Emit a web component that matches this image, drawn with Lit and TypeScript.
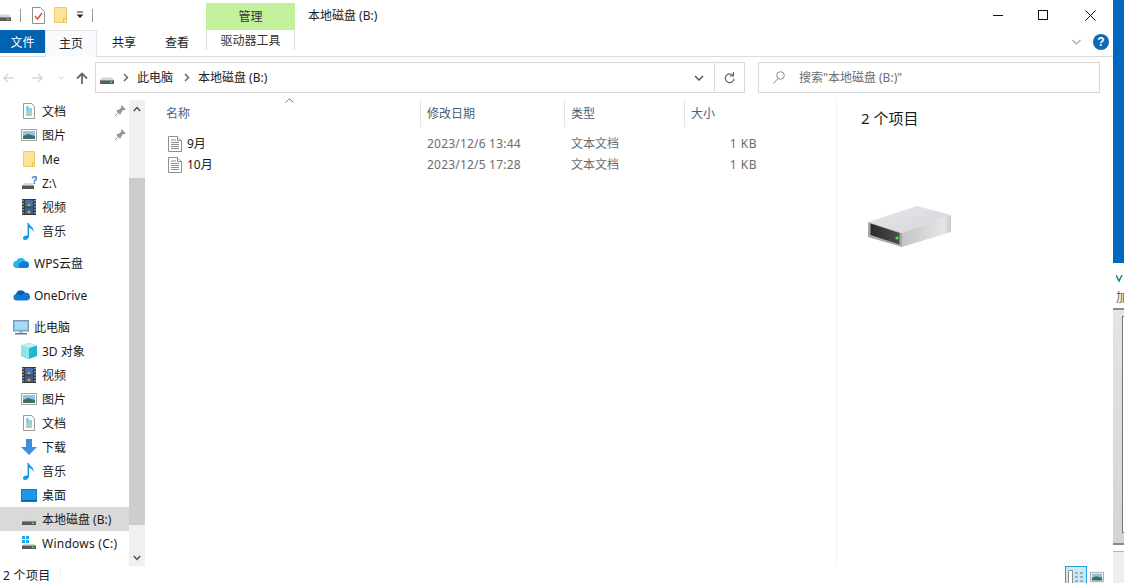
import { LitElement, html, css, svg } from "lit";
import { customElement } from "lit/decorators.js";

const driveSmall = () => html`<svg class="ic" width="16" height="16" viewBox="0 0 16 16"><path d="M3 7.5h10l2 2.5H1z" fill="#d6d6d8"/><path d="M1 10h14v4H1z" fill="#5b5b5b"/><path d="M1 10h14v1H1z" fill="#8c8c8c"/><rect x="11" y="11.5" width="2" height="1.5" fill="#3fe05a"/></svg>`;
const docIcon = () => html`<svg class="ic" width="16" height="16" viewBox="0 0 16 16"><path d="M2.5.5h8l3 3v12h-11z" fill="#fff" stroke="#9a9a9a"/><path d="M5 4h3M5 6h6M5 8h6" stroke="#2e9bd8"/><path d="M5 10h6M5 12h6" stroke="#5ea67e"/></svg>`;
const picIcon = () => html`<svg class="ic" width="16" height="14" viewBox="0 0 16 14"><rect x=".5" y="1.5" width="15" height="11" fill="#fff" stroke="#a3a3a3"/><rect x="2" y="3" width="12" height="8" fill="#8fc4ea"/><path d="M2 8l5-2 7 2v3H2z" fill="#3f6f63"/></svg>`;
const folderIcon = () => html`<svg class="ic" width="14" height="16" viewBox="0 0 14 16"><path d="M1.5.5h11v15h-11z" fill="#fbe39b" stroke="#eccd6c"/><path d="M10.5 15.5v-4h2" fill="none" stroke="#e9bd50"/></svg>`;
const netIcon = () => html`<svg class="ic" width="16" height="16" viewBox="0 0 16 16"><path d="M3 8h8l2 2.5H1z" fill="#d9d9d9"/><path d="M1 10.5h12V14H1z" fill="#555"/><text x="10" y="9" font-size="11" font-weight="700" fill="#2d7fd3" font-family="Liberation Sans">?</text></svg>`;
const videoIcon = () => html`<svg class="ic" width="14" height="16" viewBox="0 0 14 16"><rect width="14" height="16" fill="#3a3a3a"/><rect x="3" y="1" width="8" height="6.5" fill="#3f6fb0"/><rect x="3" y="8.5" width="8" height="6.5" fill="#3560a0"/><path d="M5 7l2-3 2 3zM5 14l2-3 2 3z" fill="#e2a32d"/><path d="M1 1v14M13 1v14" stroke="#ddd" stroke-dasharray="1.5 1.5"/></svg>`;
const musicIcon = () => html`<svg class="ic" width="12" height="17" viewBox="0 0 12 17"><path d="M4.5 0h1.4c.3 3 5.500 4 4.600 9-.6-2.500-2.500-3.500-4.500-4v8.500c0 2-2 3.500-4 3.500-1.500 0-2.300-1-2-2.300.4-1.500 2.500-2.500 4.500-2z" fill="#1b9ae8"/></svg>`;
const cloudWps = () => html`<svg class="ic" width="16" height="14" viewBox="0 0 16 14"><path d="M4 12a3.500 3.500 0 0 1-.6-7A5 5 0 0 1 12.500 5a3.500 3.500 0 0 1 0 7z" fill="#27b4e8"/><path d="M7 12a3 3 0 0 1 1-5.500A4 4 0 0 1 13 6a3 3 0 0 1 0 6z" fill="#1678d8"/></svg>`;
const cloudOne = () => html`<svg class="ic" width="17" height="12" viewBox="0 0 17 12"><path d="M3.500 11.500a3.300 3.300 0 0 1-.5-6.500 5 5 0 0 1 9.300-1 3.800 3.800 0 0 1 1.700 7.500z" fill="#1379d0"/><path d="M3.500 5.500a5 5 0 0 1 8.800-1.500c-2 .2-3 1.200-3.500 2.500-1.500-.7-3.500-.5-5.300-1z" fill="#0a5cab"/></svg>`;
const pcIcon = () => html`<svg class="ic" width="16" height="15" viewBox="0 0 16 15"><rect x=".5" y=".5" width="15" height="10.500" fill="#7cc4f2" stroke="#7b98ac"/><rect x="2" y="2" width="12" height="7.500" fill="#a6dcf9"/><rect x="6.500" y="11" width="3" height="2" fill="#a9b4ba"/><rect x="2" y="13" width="12" height="1.500" fill="#5d7788"/></svg>`;
const cubeIcon = () => html`<svg class="ic" width="16" height="16" viewBox="0 0 16 16"><path d="M8 0l8 2.500v10.500L8 16 0 13V2.500z" fill="#1fb9cf"/><path d="M0 2.500L8 5v11L0 13z" fill="#8fe3ea"/><path d="M8 0l8 2.500L8 5 0 2.500z" fill="#c5f0f2"/></svg>`;
const dlIcon = () => html`<svg class="ic" width="16" height="16" viewBox="0 0 16 16"><path d="M5 0h6v8h5l-8 8-8-8h5z" fill="#3d8fe0"/></svg>`;
const deskIcon = () => html`<svg class="ic" width="16" height="13" viewBox="0 0 16 13"><rect x=".5" y=".5" width="15" height="12" fill="#1c97ea" stroke="#0f7cc8"/><path d="M1 11h14v1H1z" fill="#0d5fa6"/></svg>`;
const winIcon = () => html`<svg class="ic" width="16" height="16" viewBox="0 0 16 16"><path d="M1 1h3v3H1zM5 1h3v3H5zM1 5h3v3H1zM5 5h3v3H5z" fill="#21a5ea"/><path d="M3 9h10l2 1.500H1z" fill="#d6d6d8"/><path d="M1 10.500h14V14H1z" fill="#5b5b5b"/><rect x="11" y="11.500" width="2" height="1.500" fill="#3fe05a"/></svg>`;
const pin = () => html`<svg class="pin" width="11" height="11" viewBox="0 0 11 11"><path d="M6.500 0L11 4.500 9.700 5 8 5 6 7.500 6 9 4.800 9.500 1.500 6.200 2 5 3.500 5 6 3 6 1.300z" fill="#8d979f"/><path d="M3 8L0 11" stroke="#8d979f"/></svg>`;
const txtIcon = () => html`<svg class="ic" width="14" height="16" viewBox="0 0 14 16"><path d="M.5.5h9l4 4v11H.5z" fill="#fff" stroke="#8e8e8e"/><path d="M9.500.5v4h4" fill="#eee" stroke="#8e8e8e"/><path d="M3 4h5M3 6.500h8M3 8.500h8M3 10.500h8M3 12.500h8" stroke="#8e8e8e"/></svg>`;

type Nav = { label: string; icon: () => unknown; pinned?: boolean; top?: boolean; gap?: boolean; sel?: boolean; wide?: boolean };
const nav: Nav[] = [
  { label: "文档", icon: docIcon, pinned: true },
  { label: "图片", icon: picIcon, pinned: true },
  { label: "Me", icon: folderIcon },
  { label: "Z:\\", icon: netIcon },
  { label: "视频", icon: videoIcon },
  { label: "音乐", icon: musicIcon },
  { label: "WPS云盘", icon: cloudWps, top: true, gap: true },
  { label: "OneDrive", icon: cloudOne, top: true, gap: true },
  { label: "此电脑", icon: pcIcon, top: true, gap: true },
  { label: "3D 对象", icon: cubeIcon },
  { label: "视频", icon: videoIcon },
  { label: "图片", icon: picIcon },
  { label: "文档", icon: docIcon },
  { label: "下载", icon: dlIcon },
  { label: "音乐", icon: musicIcon },
  { label: "桌面", icon: deskIcon },
  { label: "本地磁盘 (B:)", icon: driveSmall, sel: true },
  { label: "Windows (C:)", icon: winIcon, wide: true },
];
const files = [
  { n: "9月", d: "2023/12/6 13:44" },
  { n: "10月", d: "2023/12/5 17:28" },
];

const bigDrive = svg`<defs>
  <linearGradient id="t" x1="0" y1="0" x2="1" y2="1"><stop offset="0" stop-color="#e6e7ea"/><stop offset="1" stop-color="#d3d5d9"/></linearGradient>
  <linearGradient id="s" x1="0" y1="0" x2="1" y2="0"><stop offset="0" stop-color="#c4c4c6"/><stop offset=".85" stop-color="#e6e6e6"/><stop offset="1" stop-color="#c9c9cb"/></linearGradient>
  <linearGradient id="f" x1="0" y1="0" x2="1" y2="0"><stop offset="0" stop-color="#2b2b2b"/><stop offset="1" stop-color="#4c4c4c"/></linearGradient>
  </defs>
  <path d="M2 18L51 2l34 9-49 18z" fill="url(#t)"/>
  <path d="M36 29l49-18v17L36 43z" fill="url(#s)"/>
  <path d="M2 18l34 11v14L2 33z" fill="#a9a9ab"/>
  <path d="M4.500 19.500l29 9.500v11.500l-29-9.500z" fill="url(#f)"/>
  <circle cx="31" cy="34" r="1.600" fill="#3dea5c"/>`;

@customElement("app-root")
export class AppRoot extends LitElement {
  static styles = css`
    :host { display: block; width: 1124px; height: 583px; overflow: hidden; background: #fff;
      font-family: "Noto Sans", "Noto Sans CJK SC", sans-serif; font-size: 12px; color: #1a1a1a; }
    * { box-sizing: border-box; }
    .page { display: flex; height: 583px; }
    .win { width: 1113px; display: flex; flex-direction: column; }
    .ic { display: block; flex: none; }

    .title { height: 30px; display: flex; align-items: flex-end; flex: none; }
    .qat { width: 206px; height: 30px; display: flex; align-items: center; }
    .qat .clip { width: 12px; height: 16px; overflow: hidden; display: flex; justify-content: flex-end; }
    .qsep { width: 1px; height: 13px; background: #9a9a9a; }
    .manage { width: 89px; height: 27px; background: #c2f09b; display: flex; align-items: center; justify-content: center; color: #333; padding-bottom: 2px; }
    .caption { margin-left: 13px; flex: 1; height: 30px; display: flex; align-items: center; color: #222; font-size: 12px; }
    .wbtns { display: flex; height: 30px; }
    .wbtn { width: 46px; display: flex; align-items: center; justify-content: center; }

    .tabs { height: 27px; flex: none; display: flex; border-bottom: 1px solid #dadbdc; position: relative; }
    .tab { display: flex; align-items: center; justify-content: center; height: 26px; }
    .file { width: 45px; height: 23px; background: #0063b1; color: #fff; }
    .home { width: 52px; height: 27px; background: #f9fafc; border: 1px solid #e3e4e6; border-bottom: none; color: #222; padding-bottom: 2px; }
    .share { width: 54px; padding-bottom: 2px; }
    .view { width: 52px; padding-bottom: 2px; }
    .tool { width: 89px; height: 20px; margin-left: 3px; border: 1px solid #dadbdc; border-top: none; border-bottom: none; color: #333; }
    .ribbonR { margin-left: auto; display: flex; align-items: center; gap: 12px; padding: 0 4px 2px 0; }
    .help { width: 16px; height: 16px; border-radius: 50%; background: #0f68b8; color: #fff; font: 700 12px "Liberation Sans", sans-serif; display: flex; align-items: center; justify-content: center; }

    .addr { height: 42px; flex: none; display: flex; align-items: flex-start; padding-top: 5px; }
    .navbtns { width: 95px; height: 31px; display: flex; align-items: center; padding-left: 3px; }
    .crumb { width: 650px; height: 31px; border: 1px solid #d9d9d9; display: flex; align-items: center; color: #222; padding-left: 3px; }
    .crumb .sepch { width: 22px; display: flex; justify-content: center; }
    .crumb .txt1 { width: 39px; padding-bottom: 2px; }
    .crumb .txt2 { flex: 1; padding-bottom: 2px; }
    .crumb .dd { width: 31px; height: 29px; display: flex; align-items: center; justify-content: center; }
    .crumb .rf { width: 30px; height: 29px; border-left: 1px solid #d9d9d9; display: flex; align-items: center; justify-content: center; }
    .search { width: 342px; height: 31px; margin-left: 13px; border: 1px solid #d9d9d9; display: flex; align-items: center; padding-left: 14px; gap: 14px; color: #6d6d6d; }
    .search span { padding-bottom: 2px; }

    .main { flex: 1; display: flex; min-height: 0; }
    .nav { width: 129px; flex: none; }
    .nrow { height: 24px; display: flex; align-items: center; position: relative; color: #1a1a1a; }
    .nrow.gap { margin-top: 8px; }
    .nrow .slot { width: 16px; margin-left: 21px; display: flex; justify-content: center; margin-right: 5px; flex: none; }
    .nrow.top .slot { margin-left: 13px; }
    .nrow.sel { background: #d9d9d9; }
    .nrow .wide { letter-spacing: .25px; }
    .pin { position: absolute; left: 115px; top: 6px; }

    .sb { width: 16px; flex: none; background: #f0f0f0; display: flex; flex-direction: column; margin-top: 1px; }
    .sb .end { height: 17px; display: flex; align-items: center; justify-content: center; flex: none; }
    .sb .pad1 { height: 61px; }
    .sb .thumb { height: 347px; background: #cdcdcd; }
    .sb .pad2 { flex: 1; }

    .list { flex: 1; min-width: 0; padding-top: 1px; }
    .cols { display: grid; grid-template-columns: 275px 144px 120px 80px; }
    .head { height: 27px; position: relative; color: #4c607a; }
    .hcell { display: flex; align-items: center; padding-left: 6px; position: relative; padding-bottom: 2px; }
    .hcell.sep { border-left: 1px solid #e5e5e5; }
    .hcell.first { padding-left: 21px; }
    .sort { position: absolute; left: 140px; top: -2px; }
    .rows { margin-top: 6px; }
    .frow { height: 21px; color: #6d6d6d; grid-template-rows: 21px; line-height: 16px; }
    .fcell { display: flex; align-items: center; padding-left: 7px; }
    .fcell.date { letter-spacing: .2px; }
    .fcell.name { padding-left: 23px; gap: 5px; color: #1a1a1a; }
    .fcell.size { justify-content: flex-end; padding-right: 7px; letter-spacing: .5px; }

    .details { width: 277px; flex: none; border-left: 1px solid #f2f2f2; padding: 8px 0 0 24px; margin-top: 1px; }
    .dtitle { font-size: 15px; line-height: 20px; color: #1a1a1a; }
    .bigdrive { display: block; margin: 76px 0 0 5px; }

    .status { height: 17px; flex: none; display: flex; align-items: center; position: relative; padding-left: 3px; color: #1a1a1a; overflow: hidden; }
    .status .lbl { letter-spacing: .3px; padding-top: 1px; }
    .status .ssep { width: 1px; height: 14px; background: #f0f0f0; margin-left: 10px; }
    .vbtns { margin-left: auto; margin-right: 9px; display: flex; align-items: flex-start; gap: 3px; height: 17px; }
    .vb1 { width: 22px; height: 20px; background: #cce8f7; border: 1px solid #26a0da; display: flex; justify-content: center; padding-top: 3px; }
    .vb2 { padding-top: 5px; }
    .vb2 svg { width: 14px; height: 12px; }

    .strip { width: 11px; flex: none; display: flex; flex-direction: column; background: #fff; overflow: hidden; }
    .s-blue { height: 263px; background: #0067c0; flex: none; }
    .s-logo { height: 24px; padding: 7px 0 0 3px; flex: none; }
    .s-add { height: 21px; flex: none; padding-left: 3px; font-size: 12px; color: #555; line-height: 21px; white-space: nowrap; }
    .s-panel { flex: none; height: 237px; border-top: 2px solid #8a8a8a; border-bottom: 2px solid #8a8a8a; background: linear-gradient(#e4e4e4, #d4d4d4); padding: 6px 0 10px 9px; }
    .s-inner { height: 100%; border: 1px solid #777; border-right: none; background: #fff; }
    .s-foot { flex: 1; margin-top: 6px; border-top: 1px solid #b5b5b5; background: #efefef; }
  `;

  render() {
    const chev = html`<svg width="6" height="9" viewBox="0 0 6 9"><path d="M1 1l3.500 3.500L1 8" fill="none" stroke="#6b6b6b" stroke-width="1.500"/></svg>`;
    return html`<div class="page">
      <div class="win">
        <div class="title">
          <div class="qat">
            <div class="clip">${driveSmall()}</div>
            <div class="qsep" style="margin-left:8px"></div>
            <svg style="margin-left:11px" width="13" height="17" viewBox="0 0 13 17"><path d="M.5.5h8l4 4v12H.5z" fill="#fff" stroke="#8e8e8e"/><path d="M3 9l2.500 3L10 6" fill="none" stroke="#e0532a" stroke-width="1.500"/></svg>
            <svg style="margin-left:9px" width="13" height="16" viewBox="0 0 13 16"><path d="M.5.5h12v15H.5z" fill="#fbe39b" stroke="#eccd6c"/><path d="M9.500 15.500v-4h3" fill="none" stroke="#e9bd50"/></svg>
            <svg style="margin-left:9px" width="8" height="8" viewBox="0 0 8 8"><path d="M1 1h6" stroke="#222"/><path d="M.5 3.500h7L4 7z" fill="#222"/></svg>
            <div class="qsep" style="margin-left:8px"></div>
          </div>
          <div class="manage">管理</div>
          <div class="caption">本地磁盘 (B:)</div>
          <div class="wbtns">
            <div class="wbtn"><svg width="10" height="1"><rect width="10" height="1" fill="#111"/></svg></div>
            <div class="wbtn"><svg width="10" height="10" style="margin-left:-2px"><rect x=".5" y=".5" width="9" height="9" fill="none" stroke="#111"/></svg></div>
            <div class="wbtn"><svg width="11" height="11"><path d="M.5.500l10 10M10.500.500l-10 10" stroke="#111"/></svg></div>
          </div>
        </div>
        <div class="tabs">
          <div class="tab file">文件</div>
          <div class="tab home">主页</div>
          <div class="tab share">共享</div>
          <div class="tab view">查看</div>
          <div class="tab tool">驱动器工具</div>
          <div class="ribbonR">
            <svg width="9" height="6" viewBox="0 0 9 6"><path d="M.5 1L4.500 5 8.500 1" fill="none" stroke="#a9a9a9" stroke-width="1.200"/></svg>
            <div class="help">?</div>
          </div>
        </div>
        <div class="addr">
          <div class="navbtns">
            <svg width="11" height="10" viewBox="0 0 11 10"><path d="M11 5H1M5 1L1 5l4 4" fill="none" stroke="#d6d6d6" stroke-width="1.500"/></svg>
            <svg style="margin-left:18px" width="11" height="10" viewBox="0 0 11 10"><path d="M0 5h10M6 1l4 4-4 4" fill="none" stroke="#d6d6d6" stroke-width="1.500"/></svg>
            <svg style="margin-left:15px" width="6" height="4" viewBox="0 0 6 4"><path d="M.5.500L3 3 5.500.500" fill="none" stroke="#d0d0d0"/></svg>
            <svg style="margin-left:12px" width="12" height="12" viewBox="0 0 12 12"><path d="M6 12V1.500M1 6.500l5-5 5 5" fill="none" stroke="#666" stroke-width="1.800"/></svg>
          </div>
          <div class="crumb">
            ${driveSmall()}
            <span class="sepch">${chev}</span>
            <span class="txt1">此电脑</span>
            <span class="sepch">${chev}</span>
            <span class="txt2">本地磁盘 (B:)</span>
            <span class="dd"><svg width="10" height="6" viewBox="0 0 10 6"><path d="M1 1l4 4 4-4" fill="none" stroke="#555" stroke-width="1.500"/></svg></span>
            <span class="rf"><svg width="11" height="12" viewBox="0 0 11 12"><path d="M9 3.500A4.300 4.300 0 1 0 10 6.500M9.500 0v4h-4" fill="none" stroke="#666" stroke-width="1.200"/></svg></span>
          </div>
          <div class="search">
            <svg class="ic" width="12" height="13" viewBox="0 0 12 13"><circle cx="7.500" cy="4.500" r="3.800" fill="none" stroke="#8c8c8c"/><path d="M5 7.500L.5 12.500" stroke="#8c8c8c"/></svg>
            <span>搜索"本地磁盘 (B:)"</span>
          </div>
        </div>
        <div class="main">
          <div class="nav">
            ${nav.map(
              (n) => html`<div class="nrow ${n.top ? "top" : ""} ${n.gap ? "gap" : ""} ${n.sel ? "sel" : ""}">
                <span class="slot">${n.icon()}</span><span class=${n.wide ? "wide" : ""}>${n.label}</span>${n.pinned ? pin() : ""}
              </div>`
            )}
          </div>
          <div class="sb">
            <div class="end"><svg width="8" height="6" viewBox="0 0 8 6"><path d="M.8 5L4 1.500 7.200 5" fill="none" stroke="#505050" stroke-width="1.500"/></svg></div>
            <div class="pad1"></div>
            <div class="thumb"></div>
            <div class="pad2"></div>
            <div class="end"><svg width="8" height="6" viewBox="0 0 8 6"><path d="M.8 1L4 4.500 7.200 1" fill="none" stroke="#505050" stroke-width="1.500"/></svg></div>
          </div>
          <div class="list">
            <div class="cols head">
              <div class="hcell first">名称<svg class="sort" width="9" height="5" viewBox="0 0 9 5"><path d="M.5 4.500L4.500.800 8.500 4.500" fill="none" stroke="#777"/></svg></div>
              <div class="hcell sep">修改日期</div>
              <div class="hcell sep">类型</div>
              <div class="hcell sep">大小</div>
            </div>
            <div class="rows">
              ${files.map(
                (f) => html`<div class="cols frow">
                  <div class="fcell name">${txtIcon()}<span>${f.n}</span></div>
                  <div class="fcell date">${f.d}</div>
                  <div class="fcell">文本文档</div>
                  <div class="fcell size">1 KB</div>
                </div>`
              )}
            </div>
          </div>
          <div class="details">
            <div class="dtitle">2 个项目</div>
            <svg class="bigdrive" width="90" height="46" viewBox="0 0 90 46">${bigDrive}</svg>
          </div>
        </div>
        <div class="status">
          <span class="lbl">2 个项目</span><span class="ssep"></span>
          <div class="vbtns">
            <div class="vb1"><svg width="16" height="14" viewBox="0 0 16 14"><path d="M.5.500h4v13h-4z" fill="#fff" stroke="#8e8e8e"/><path d="M7 3h3M12 3h3M7 7h3M12 7h3M7 11h3M12 11h3" stroke="#5f7f94"/></svg></div>
            <div class="vb2">${picIcon()}</div>
          </div>
        </div>
      </div>
      <div class="strip">
        <div class="s-blue"></div>
        <div class="s-logo"><svg width="8" height="9" viewBox="0 0 8 9"><path d="M0 1l3 6 3-6" fill="none" stroke="#1d7f8c" stroke-width="1.500"/></svg></div>
        <div class="s-add">加</div>
        <div class="s-panel"><div class="s-inner"></div></div>
        <div class="s-foot"></div>
      </div>
    </div>`;
  }
}
